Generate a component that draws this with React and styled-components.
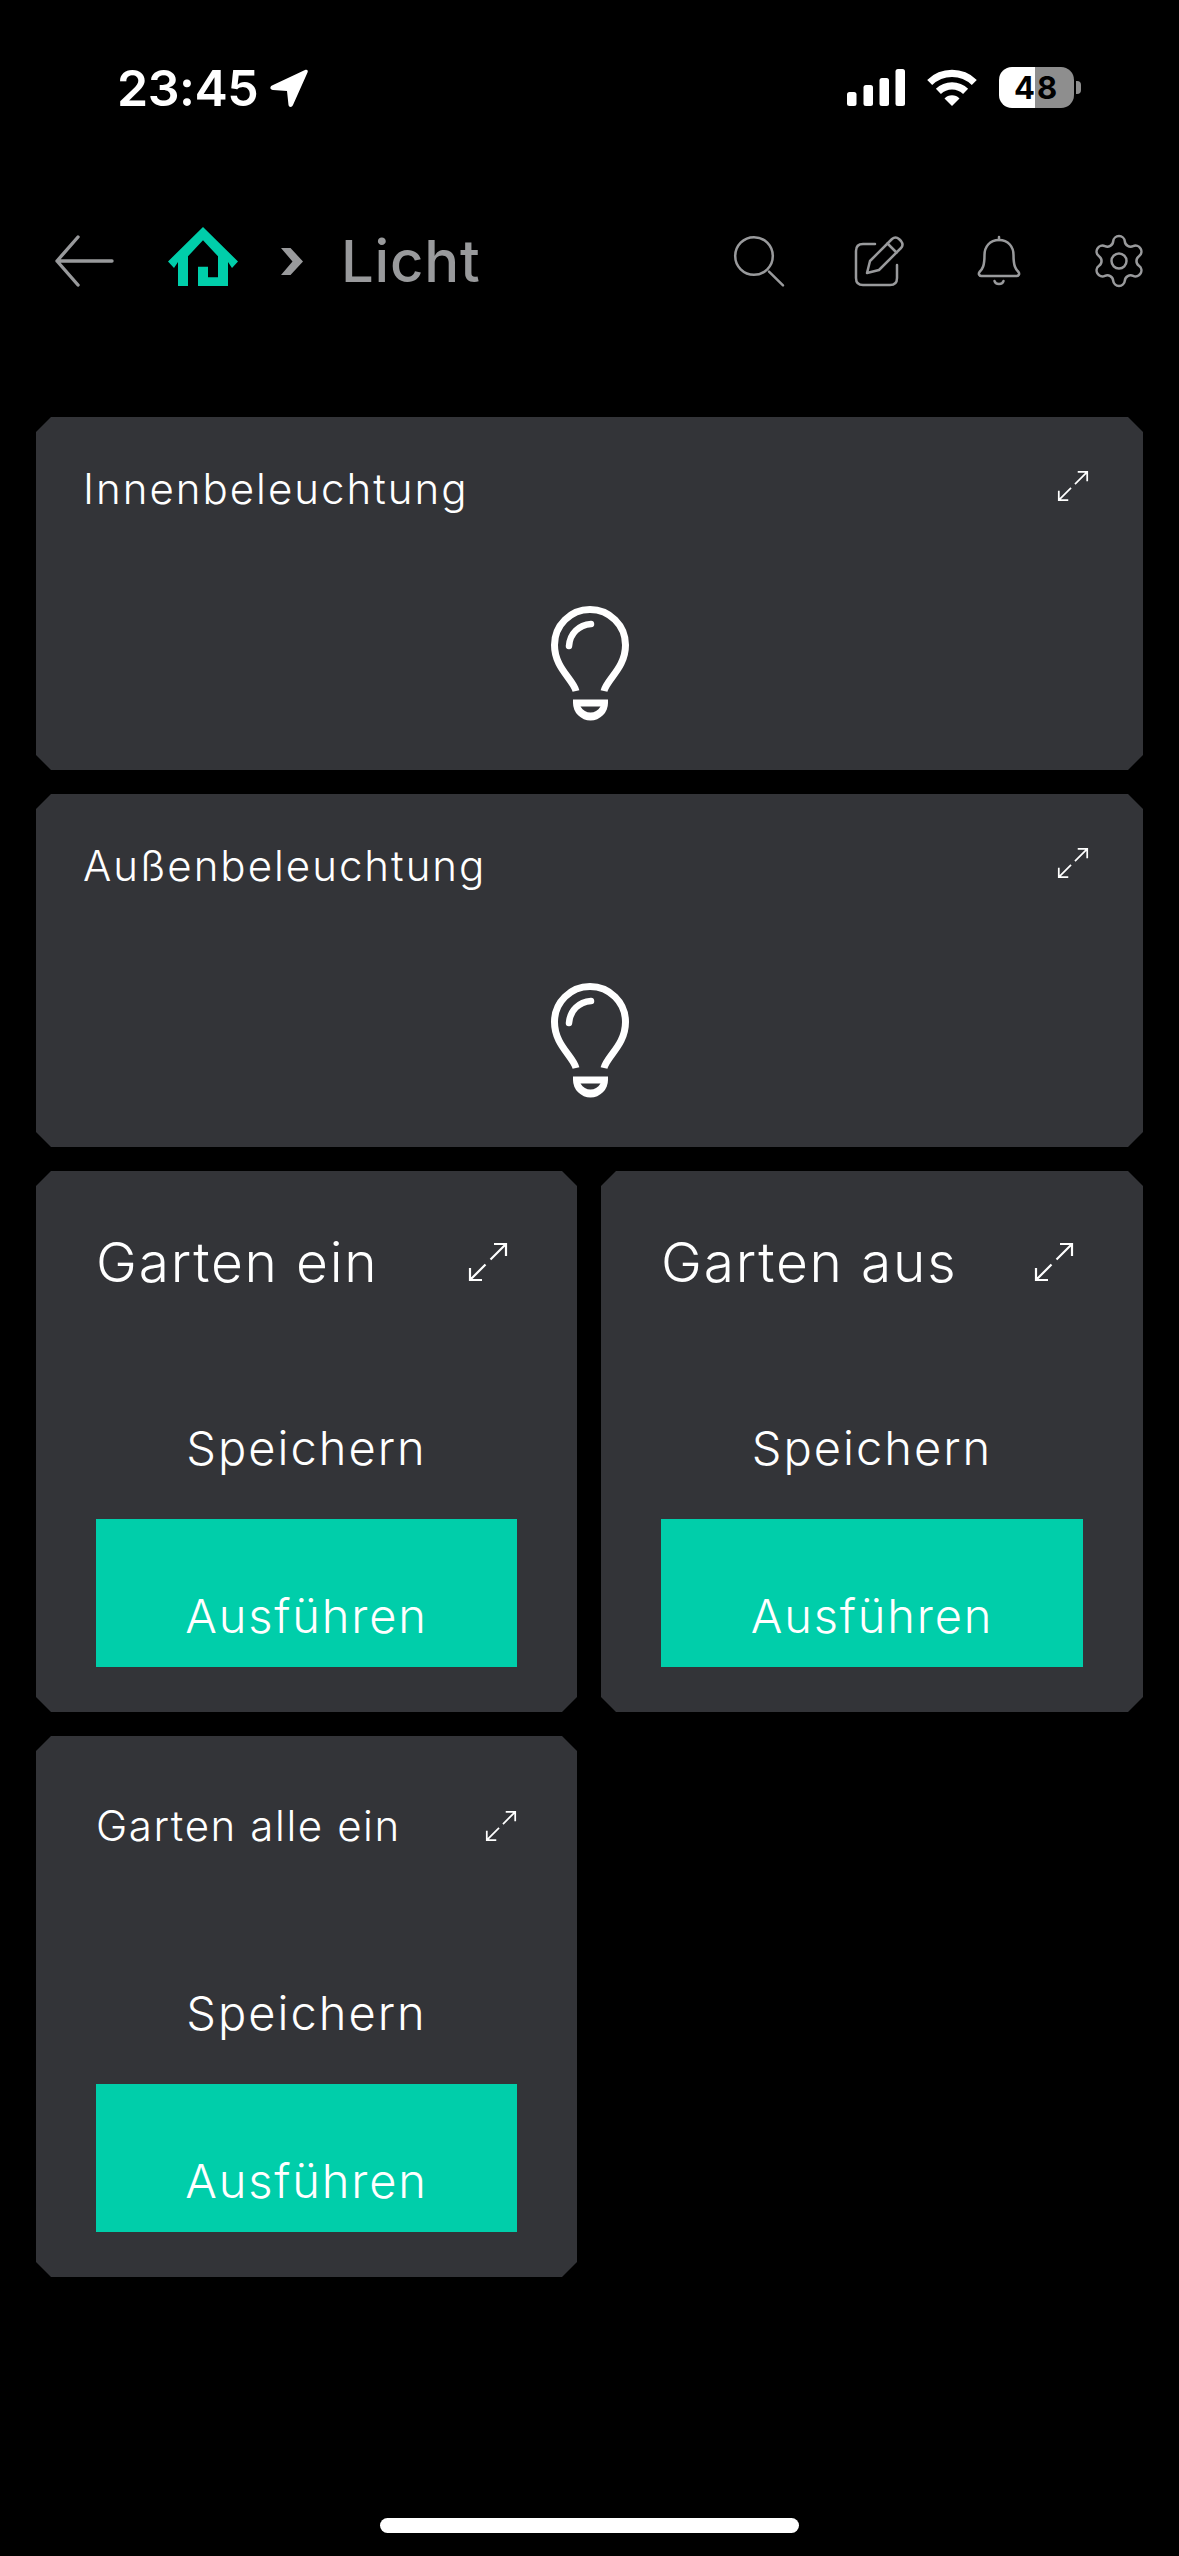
import React from "react";
import styled, { createGlobalStyle } from "styled-components";

const GlobalStyle = createGlobalStyle`
    html, body {
        margin: 0;
        background: #000;
    }
    * {
        box-sizing: border-box;
    }
`;

const GREY = "#999a9c";
const GREEN = "#00ceaa";
const CARD = "#333438";

const ArrowBack = () => (
    <NavIcon $w={60} $h={52} viewBox="0 0 60 52" fill="none" stroke={GREY} strokeWidth="3.4" strokeLinecap="round" strokeLinejoin="round">
        <path d="M58 26H3M24 2L3 26L24 50" />
    </NavIcon>
);

const HomeIcon = () => (
    <NavIcon $w={70} $h={59} viewBox="0 0 70 59" fill={GREEN}>
        <path d="M35 0L70 34.500L64 41L60 35V59H30V39.700H40V50.300H50V29.300L35 13.300L20 29.300V59H10V35L6 41L0 34.500Z" />
    </NavIcon>
);

const Chevron = () => (
    <NavIcon $w={22} $h={27} viewBox="0 0 22 27" fill={GREY}>
        <path d="M0 0H9.500L22 13.500L9.500 27H0L11.500 13.500Z" />
    </NavIcon>
);

const SearchIcon = () => (
    <NavIcon $w={50} $h={50} viewBox="0 0 50 50" fill="none" stroke={GREY} strokeWidth="2.5" strokeLinecap="round">
        <circle cx="20" cy="20" r="18.800" />
        <path d="M35 35.700L49 49.300" />
    </NavIcon>
);

const EditIcon = () => (
    <NavIcon $w={50} $h={50} viewBox="0 0 50 50" fill="none" stroke={GREY} strokeWidth="2.5" strokeLinecap="round" strokeLinejoin="round">
        <path d="M21 8H9Q2 8 2 15V42Q2 49 9 49H36Q43 49 43 42V29" />
        <path d="M13 37L16 25L38 3Q41.500 0 45 3L47 5Q50 9 47 12L25 34Z" />
        <path d="M33.500 7.500L42.500 16.500" />
    </NavIcon>
);

const BellIcon = () => (
    <NavIcon $w={50} $h={50} viewBox="-3.500 0 50 50" fill="none" stroke={GREY} strokeWidth="2.5" strokeLinecap="round" strokeLinejoin="round">
        <path d="M21.500 4C12 4 7 11 7 19C7 30 5 33 2 36C0.500 38 2 40 4 40H39C41 40 42.500 38 41 36C38 33 36 30 36 19C36 11 31 4 21.500 4Z" />
        <path d="M21.500 1V4M17 45C18 49 25 49 26 45" />
    </NavIcon>
);

const GearIcon = () => (
    <NavIcon $w={50} $h={50} viewBox="2 2 20 20" fill="none" stroke={GREY} strokeWidth="1" strokeLinecap="round" strokeLinejoin="round">
        <path d="M9.671 4.136a2.34 2.34 0 0 1 4.659 0 2.34 2.34 0 0 0 3.319 1.915 2.34 2.34 0 0 1 2.33 4.033 2.34 2.34 0 0 0 0 3.831 2.34 2.34 0 0 1-2.33 4.033 2.34 2.34 0 0 0-3.319 1.915 2.34 2.34 0 0 1-4.659 0 2.34 2.34 0 0 0-3.32-1.915 2.34 2.34 0 0 1-2.33-4.033 2.34 2.34 0 0 0 0-3.831A2.34 2.34 0 0 1 6.35 6.051a2.34 2.34 0 0 0 3.32-1.915" />
        <circle cx="12" cy="12" r="3" />
    </NavIcon>
);

const LocationIcon = () => (
    <NavIcon $w={38} $h={38} viewBox="0 0 38 38" fill="#fff">
        <path d="M35 1C37 0 38.500 1.500 37.500 3.500L23 36C22 38.500 19 38.500 18.500 36L17 22L3 21C0 20.500 -0.500 18 2 16.500Z" />
    </NavIcon>
);

const SignalIcon = () => (
    <NavIcon $w={58} $h={37} viewBox="0 0 58 37" fill="#fff">
        <rect x="0" y="23" width="9.500" height="14" rx="2.500" />
        <rect x="16.500" y="16" width="9.500" height="21" rx="2.500" />
        <rect x="32.500" y="9" width="9.500" height="28" rx="2.500" />
        <rect x="48.500" y="0" width="9.500" height="37" rx="2.500" />
    </NavIcon>
);

const WifiIcon = () => (
    <NavIcon $w={50} $h={37} viewBox="0 0 50 37" fill="none" stroke="#fff" strokeWidth="7.200">
        <path d="M2.700 13.500A32 32 0 0 1 47.300 13.500" />
        <path d="M11.400 22.400A19.500 19.500 0 0 1 38.600 22.400" />
        <path d="M17.500 29.500L25 37L32.500 29.500A10.500 10.500 0 0 0 17.500 29.500Z" fill="#fff" stroke="none" />
    </NavIcon>
);

const BulbIcon = () => (
    <NavIcon $w={78} $h={115} viewBox="0 0 78 115" fill="none" stroke="#fff" strokeWidth="7">
        <path d="M25 85C22 73 3.500 62 3.500 39A35.500 35.500 0 1 1 74.500 39C74.500 62 56 73 53 85" />
        <path d="M18 40C19 27 28 19 40 18" strokeWidth="6.500" strokeLinecap="round" />
        <path
            fillRule="evenodd"
            stroke="none"
            fill="#fff"
            d="M22 93.500H57V97A17.500 17.500 0 0 1 22 97ZM29.500 100.500H49.500C47 104.500 43.500 106.500 39.500 106.500C35.500 106.500 32 104.500 29.500 100.500Z"
        />
    </NavIcon>
);

const ExpandIcon = ({ size }) => (
    <NavIcon $w={size} $h={size} viewBox="0 0 38 38" fill="none" stroke="#fff" strokeWidth="2.200">
        <path d="M25 1H37V13M37 1L21.500 16.500M16.500 21.500L1 37M1 25V37H13" />
    </NavIcon>
);

const WideCard = ({ title }) => (
    <WidePanel>
        <WideHeader>
            <WideTitle>{title}</WideTitle>
            <WideExpand>
                <ExpandIcon size={30} />
            </WideExpand>
        </WideHeader>
        <BulbSlot>
            <BulbIcon />
        </BulbSlot>
    </WidePanel>
);

const ActionCard = ({ title, small }) => (
    <ActionPanel>
        <ActionHeader $small={small}>
            <ActionTitle $small={small}>{title}</ActionTitle>
            <ExpandIcon size={small ? 30 : 38} />
        </ActionHeader>
        <SaveLabel>Speichern</SaveLabel>
        <RunButton>Ausführen</RunButton>
    </ActionPanel>
);

export default function App() {
    return (
        <Page>
            <GlobalStyle />
            <StatusBar>
                <StatusLeft>
                    <Time>23:45</Time>
                    <LocationIcon />
                </StatusLeft>
                <StatusRight>
                    <SignalIcon />
                    <WifiIcon />
                    <Battery>
                        <BatteryBody>48</BatteryBody>
                        <BatteryNub />
                    </Battery>
                </StatusRight>
            </StatusBar>

            <NavBar>
                <Crumbs>
                    <ArrowBack />
                    <HomeLink>
                        <HomeIcon />
                    </HomeLink>
                    <Chevron />
                    <PageName>Licht</PageName>
                </Crumbs>
                <NavActions>
                    <SearchIcon />
                    <EditIcon />
                    <BellIcon />
                    <GearIcon />
                </NavActions>
            </NavBar>

            <CardGrid>
                <WideCard title="Innenbeleuchtung" />
                <WideCard title="Außenbeleuchtung" />
                <ActionCard title="Garten ein" />
                <ActionCard title="Garten aus" />
                <ActionCard title="Garten alle ein" small />
            </CardGrid>

            <HomeIndicator />
        </Page>
    );
}

const Page = styled.div`
    display: flex;
    flex-direction: column;
    width: 1179px;
    height: 2556px;
    background: #000;
    color: #fff;
    font-family: Inter, "Liberation Sans", sans-serif;
    overflow: hidden;
`;

const NavIcon = styled.svg`
    display: block;
    flex: none;
    width: ${(p) => p.$w}px;
    height: ${(p) => p.$h}px;
    overflow: visible;
`;

const StatusBar = styled.div`
    display: flex;
    justify-content: space-between;
    align-items: center;
    height: 41px;
    margin-top: 67px;
    padding: 0 98px 0 117px;
`;

const StatusLeft = styled.div`
    display: flex;
    align-items: center;
    gap: 12px;
`;

const Time = styled.span`
    font-size: 50px;
    font-weight: 600;
    line-height: 41px;
    letter-spacing: -0.5px;
    padding-top: 2px;
`;

const StatusRight = styled.div`
    display: flex;
    align-items: center;
    gap: 22px;
`;

const Battery = styled.div`
    display: flex;
    align-items: center;
    gap: 2px;
`;

const BatteryBody = styled.div`
    display: flex;
    align-items: center;
    justify-content: center;
    width: 75px;
    height: 41px;
    border-radius: 13px;
    background: linear-gradient(to right, #fff 48%, #8e8e8e 48%);
    color: #000;
    font-size: 31px;
    font-weight: 700;
    letter-spacing: 2px;
`;

const BatteryNub = styled.div`
    width: 5px;
    height: 13px;
    border-radius: 0 4px 4px 0;
    background: #8e8e8e;
`;

const NavBar = styled.div`
    display: flex;
    justify-content: space-between;
    align-items: center;
    height: 60px;
    margin-top: 119px;
    padding: 8px 35px 0 54px;
`;

const Crumbs = styled.div`
    display: flex;
    align-items: center;
`;

const HomeLink = styled.div`
    margin: 0 43px 9px 54px;
`;

const PageName = styled.span`
    margin-left: 38px;
    color: ${GREY};
    font-size: 58px;
    font-weight: 450;
    line-height: 60px;
    letter-spacing: 0.8px;
`;

const NavActions = styled.div`
    display: flex;
    align-items: center;
    gap: 70px;
`;

const CardGrid = styled.div`
    display: grid;
    grid-template-columns: 541px 542px;
    gap: 24px;
    margin-top: 130px;
    padding: 0 36px;
`;

const Panel = styled.div`
    display: flex;
    flex-direction: column;
    background: ${CARD};
    clip-path: polygon(
        15px 0,
        calc(100% - 15px) 0,
        100% 15px,
        100% calc(100% - 15px),
        calc(100% - 15px) 100%,
        15px 100%,
        0 calc(100% - 15px),
        0 15px
    );
`;

const WidePanel = styled(Panel)`
    grid-column: span 2;
    height: 353px;
    padding: 47px 55px 49px 47px;
`;

const WideHeader = styled.div`
    display: flex;
    justify-content: space-between;
    align-items: flex-start;
    height: 50px;
`;

const WideTitle = styled.div`
    font-size: 42px;
    font-weight: 340;
    line-height: 50px;
    letter-spacing: 2px;
`;

const WideExpand = styled.div`
    padding-top: 7px;
`;

const BulbSlot = styled.div`
    display: flex;
    justify-content: center;
    margin-top: auto;
    padding-left: 8px;
`;

const ActionPanel = styled(Panel)`
    height: 541px;
    padding: 0 60px 45px;
`;

const ActionHeader = styled.div`
    display: flex;
    justify-content: space-between;
    align-items: center;
    height: 60px;
    margin-top: ${(p) => (p.$small ? 60 : 61)}px;
    padding-right: ${(p) => (p.$small ? 1 : 10)}px;
`;

const ActionTitle = styled.div`
    font-size: ${(p) => (p.$small ? 42 : 55)}px;
    font-weight: 340;
    line-height: 60px;
    letter-spacing: ${(p) => (p.$small ? 1.6 : 1.8)}px;
`;

const SaveLabel = styled.div`
    margin-top: auto;
    margin-bottom: 43px;
    font-size: 47px;
    font-weight: 340;
    line-height: 56px;
    letter-spacing: 2px;
    text-align: center;
`;

const RunButton = styled.div`
    display: flex;
    align-items: flex-end;
    justify-content: center;
    height: 148px;
    padding-bottom: 23px;
    background: ${GREEN};
    font-size: 47px;
    font-weight: 340;
    line-height: 56px;
    letter-spacing: 1.8px;
`;

const HomeIndicator = styled.div`
    flex: none;
    width: 419px;
    height: 15px;
    margin: auto auto 23px;
    border-radius: 8px;
    background: #fff;
`;
